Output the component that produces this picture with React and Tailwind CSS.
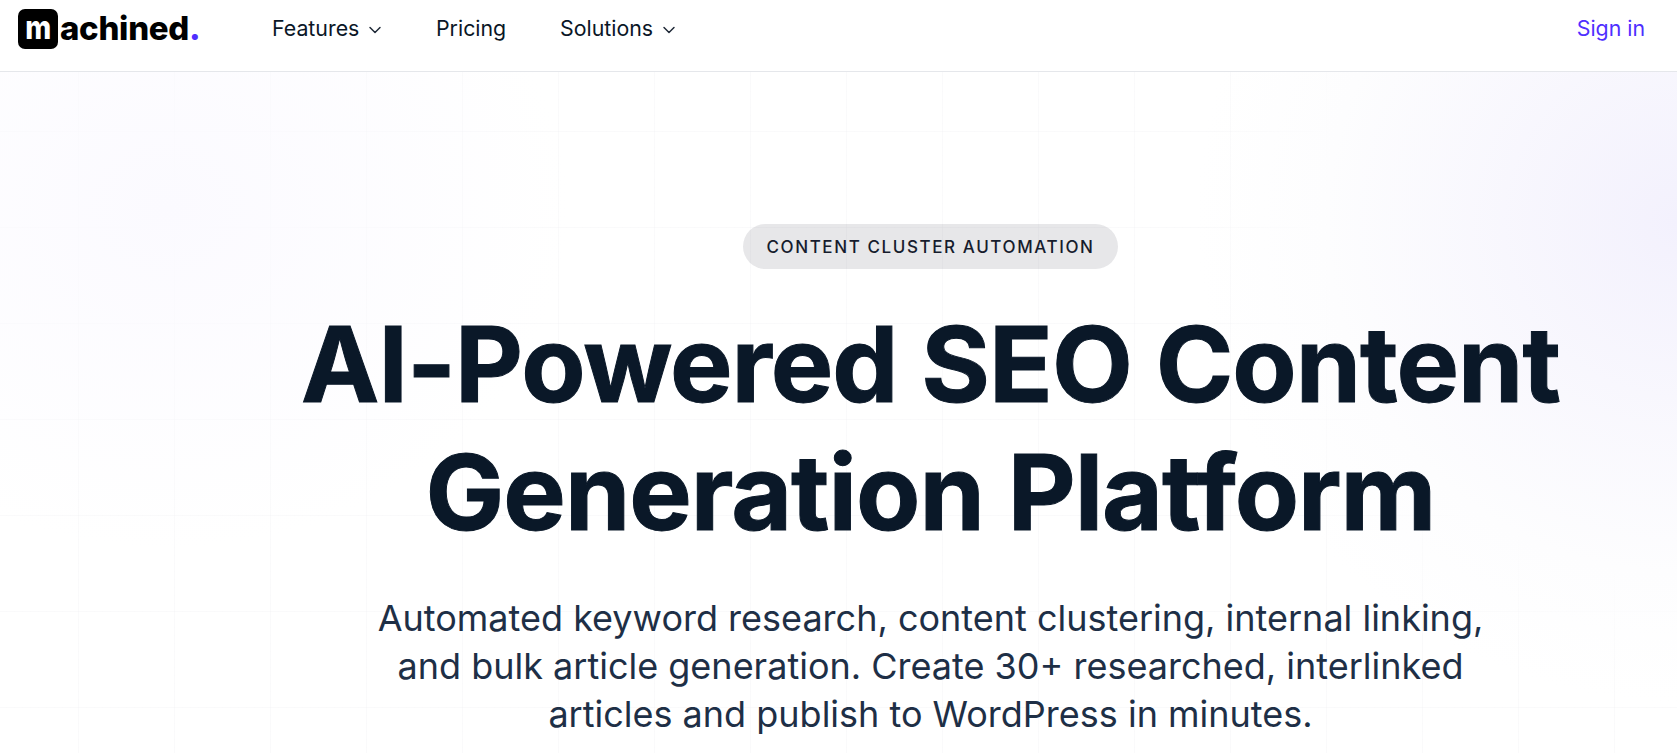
import React from "react";

const Chevron = () => (
  <svg width="20" height="20" viewBox="0 0 24 24" fill="none" stroke="currentColor" strokeWidth="1.75" strokeLinecap="round" strokeLinejoin="round" className="text-[#1f2937] mt-[3px]">
    <path d="m6 9 6 6 6-6" />
  </svg>
);

export default function App() {
  return (
    <div className="h-screen overflow-hidden bg-white font-['Inter',sans-serif] text-[#0a1626]">
      <header className="h-[72px] flex items-start border-b border-[#e5e7eb] pl-[18px] pr-[32px] pt-[9px] bg-white">
        <div className="flex items-center w-[254px] h-[40px]">
          <span className="w-[40px] h-[40px] rounded-[7px] bg-black text-white flex items-center justify-center leading-none pb-[3px]"><span className="text-[33px] font-extrabold scale-x-[0.85]">m</span></span>
          <span className="text-[33px] font-extrabold text-black leading-none tracking-[-0.3px] ml-[2px] pb-[2px]">achined<span className="text-[#4f2fff]">.</span></span>
        </div>
        <nav className="flex items-center text-[21.33px] leading-[28px] flex-1 pt-[5px]">
          <a className="flex items-center gap-[6px] w-[165px]">Features <Chevron /></a>
          <a className="w-[124px] ml-[-1px]">Pricing</a>
          <a className="flex items-center gap-[6px]">Solutions <Chevron /></a>
        </nav>
        <a className="text-[21.33px] leading-[28px] text-[#4f2fff] pt-[5px]">Sign in</a>
      </header>
      <main className="relative h-[681px] overflow-hidden">
        <div className="absolute inset-0 bg-[linear-gradient(to_right,#f5f5f780_1px,transparent_1px),linear-gradient(to_bottom,#f5f5f780_1px,transparent_1px)] bg-[size:96px_96px] bg-[position:78px_59px]" />
        <div className="absolute inset-0 bg-[radial-gradient(circle_at_100%_22%,#f3f1fd_0,#fdfdfe_350px,transparent_480px),radial-gradient(ellipse_400px_340px_at_10%_20%,#fbfaff_0,transparent_100%)]" />
        <div className="relative flex flex-col items-center pl-[184px]">
          <span className="mt-[152px] h-[45px] w-[375px] rounded-full bg-[#18182a]/10 flex items-center justify-center pt-[2px] text-[17px] font-medium tracking-[1.6px] text-[#161c2d]">CONTENT CLUSTER AUTOMATION</span>
          <h1 className="mt-[31px] text-center text-[105px] leading-[128px] font-bold tracking-[-1px] [-webkit-text-stroke:1px_#0a1828] whitespace-nowrap text-[#0a1828]">AI-Powered SEO Content<br />Generation Platform</h1>
          <p className="mt-[38px] text-center text-[36px] leading-[48px] text-[#1e2f46] whitespace-nowrap">Automated keyword research, content clustering, internal linking,<br />and bulk article generation. Create 30+ researched, interlinked<br />articles and publish to WordPress in minutes.</p>
        </div>
      </main>
    </div>
  );
}
